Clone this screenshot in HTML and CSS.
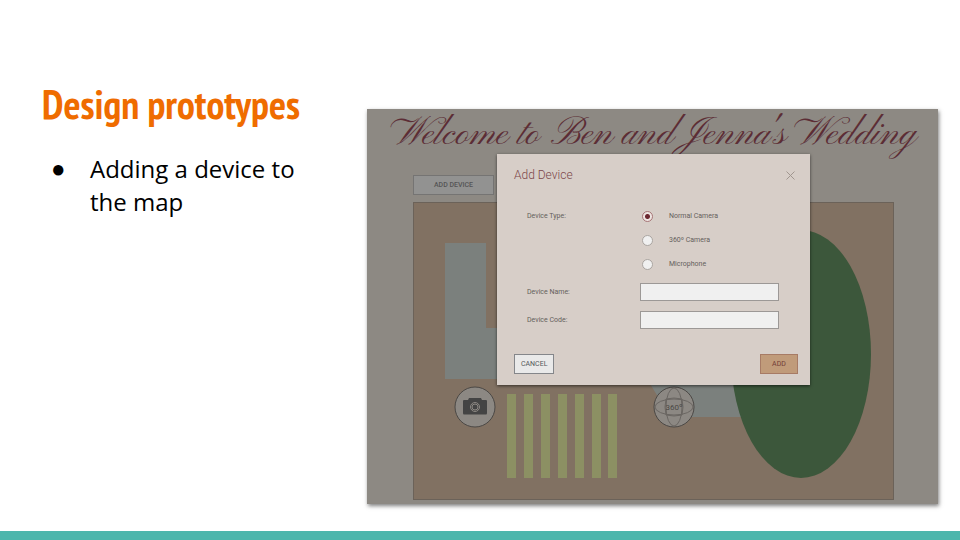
FILE: index.html
```html
<!DOCTYPE html>
<html lang="en">
<head>
<meta charset="utf-8">
<meta name="viewport" content="width=device-width, initial-scale=1">
<title>Design prototypes</title>
<link rel="stylesheet" href="styles.css">
</head>
<body>
<div class="slide">
  <main class="content">
    <section class="notes">
      <h1 class="notes-title">Design prototypes</h1>
      <ul class="notes-list">
        <li>Adding a device to the map</li>
      </ul>
    </section>

    <section class="prototype">
      <h2 class="banner">Welcome to Ben and Jenna's Wedding</h2>
      <button class="button open-button" type="button">ADD DEVICE</button>
      <svg class="map" viewBox="0 0 481 298" role="img" aria-label="Venue map">
        <rect class="ground" x="0.5" y="0.5" width="480" height="297"/>
        <path class="building" d="M32 41H73V126H120V177H32Z"/>
        <path class="building" d="M230 170L257 215H350V170Z"/>
        <ellipse class="garden" cx="388" cy="152" rx="70" ry="124"/>
        <g class="tables">
          <rect x="94" y="192" width="9" height="84"/>
          <rect x="111" y="192" width="9" height="84"/>
          <rect x="128" y="192" width="9" height="84"/>
          <rect x="145" y="192" width="9" height="84"/>
          <rect x="162" y="192" width="9" height="84"/>
          <rect x="179" y="192" width="9" height="84"/>
          <rect x="195" y="192" width="9" height="84"/>
        </g>
        <g transform="translate(62 205)">
          <circle class="pin" r="20"/>
          <path class="camera" d="M-11 -7H-7L-6 -9H6L7 -7H11Q12 -7 12 -6V6Q12 7.500 11 7.500H-11Q-12 7.500 -12 6V-6Q-12 -7 -11 -7Z"/>
          <circle class="lens" r="4.500"/>
          <circle class="lens" r="3"/>
        </g>
        <g transform="translate(261 205)">
          <circle class="pin" r="20"/>
          <g class="globe">
            <ellipse rx="8" ry="19"/>
            <ellipse rx="19" ry="8"/>
            <path d="M-8 -8Q0 -10 8 -8Q10 0 8 8Q0 10 -8 8Q-10 0 -8 -8Z"/>
          </g>
          <text class="globe-text" x="0" y="3">360º</text>
        </g>
      </svg>

      <form class="dialog" role="dialog" aria-labelledby="dialog-title">
        <header class="dialog-header">
          <h3 class="dialog-title" id="dialog-title">Add Device</h3>
          <button class="close" type="button" aria-label="Close">
            <svg viewBox="0 0 9 9"><path d="M0.500 0.500L8.500 8.500M8.500 0.500L0.500 8.500"/></svg>
          </button>
        </header>
        <div class="fields">
          <span id="type-label">Device Type:</span>
          <div class="options" role="radiogroup" aria-labelledby="type-label">
            <label class="option"><input type="radio" name="type" checked>Normal Camera</label>
            <label class="option"><input type="radio" name="type">360º Camera</label>
            <label class="option"><input type="radio" name="type">Microphone</label>
          </div>
          <label for="device-name">Device Name:</label>
          <input class="textbox" id="device-name" type="text">
          <label for="device-code">Device Code:</label>
          <input class="textbox" id="device-code" type="text">
        </div>
        <footer class="actions">
          <button class="button cancel" type="button">CANCEL</button>
          <button class="button add" type="submit">ADD</button>
        </footer>
      </form>
    </section>
  </main>
  <div class="accent-bar"></div>
</div>
</body>
</html>
```
FILE: styles.css
```css
* {
  box-sizing: border-box;
}

body {
  margin: 0;
  background: #fff;
  color: #000;
  font-family: "Open Sans", sans-serif;
}

.slide {
  display: flex;
  flex-direction: column;
  min-height: 100vh;
}

.content {
  flex: 1;
  display: grid;
  grid-template-columns: minmax(0, 325fr) minmax(0, 571fr);
  align-items: start;
  padding: 78px 22px 16px 42px;
}

.accent-bar {
  height: 9px;
  background: #4db6ac;
}

.notes {
  padding-right: 48px;
}

.notes-title {
  margin: 0;
  color: #ef6c00;
  font: bold 40px/52px "PT Sans Narrow", "Liberation Sans Narrow", "Liberation Sans", sans-serif;
  white-space: nowrap;
}

.notes-list {
  margin: 22px 0 0;
  padding: 0;
  list-style: none;
  font-size: 24px;
  line-height: 33px;
}

.notes-list li {
  display: flex;
}

.notes-list li::before {
  content: "●";
  flex: none;
  width: 39px;
  padding-left: 9px;
  font-family: "Liberation Sans", sans-serif;
}

.prototype {
  position: relative;
  display: flex;
  flex-direction: column;
  align-items: flex-start;
  margin-top: 31px;
  padding: 0 44px 4px 46px;
  background: #8d8983;
  box-shadow: 1px 2px 4px rgba(0, 0, 0, 0.5);
  font-family: Roboto, sans-serif;
}

.banner {
  align-self: center;
  margin: 0 -44px 14px;
  color: #5c2d35;
  font: 38px/52px "Pinyon Script", "Liberation Serif", serif;
  white-space: nowrap;
}

.button {
  height: 20px;
  padding: 0 6px;
  border: 1px solid #84868a;
  font: 7px/18px Roboto, sans-serif;
}

.open-button {
  width: 81px;
  margin-bottom: 7px;
  border-color: #757473;
  background: #929291;
  color: #555;
  font-weight: 500;
}

.map {
  display: block;
  width: 100%;
}

.ground {
  fill: #817162;
  stroke: #6b6259;
}

.building {
  fill: #7b807d;
}

.garden {
  fill: #3c573b;
}

.tables {
  fill: #8c9063;
}

.pin {
  fill: #8c8883;
  stroke: #4b4845;
}

.camera {
  fill: #444;
}

.lens {
  fill: none;
  stroke: #8c8883;
}

.globe {
  fill: none;
  stroke: #6a6662;
}

.globe-text {
  fill: #4b4845;
  font-size: 8px;
  text-anchor: middle;
}

.dialog {
  position: absolute;
  top: 45px;
  left: 130px;
  width: 313px;
  padding: 13px 12px 11px 17px;
  background: #d7cec8;
  box-shadow: 0 1px 3px rgba(0, 0, 0, 0.6);
  color: #655f5c;
  font-size: 7px;
}

.dialog-header {
  display: flex;
  align-items: center;
  justify-content: space-between;
  margin-bottom: 24px;
}

.dialog-title {
  margin: 0;
  color: #7c4648;
  font-size: 12px;
  font-weight: 300;
  line-height: 16px;
}

.close {
  width: 9px;
  height: 9px;
  margin-right: 3px;
  padding: 0;
  border: 0;
  background: none;
}

.close svg {
  display: block;
  stroke: #a0968f;
}

.fields {
  display: grid;
  grid-template-columns: 113px 1fr;
  row-gap: 10px;
  padding: 0 19px 0 13px;
  line-height: 18px;
}

.options {
  display: grid;
  row-gap: 6px;
}

.option {
  display: flex;
  align-items: center;
}

.option input {
  appearance: none;
  width: 11px;
  height: 11px;
  margin: 0 16px 0 2px;
  border: 1px solid #aaa5a1;
  border-radius: 50%;
  background: #f0f0f0;
}

.option input:checked {
  border-color: #a77678;
  background: radial-gradient(circle, #6b2730 2px, #eee4e1 3px);
}

.textbox {
  width: 100%;
  height: 18px;
  padding: 0 4px;
  border: 1px solid #9c9896;
  background: #f0f0f0;
  font: inherit;
}

.actions {
  display: flex;
  justify-content: space-between;
  margin-top: 25px;
}

.cancel {
  background: #e9e9e9;
  color: #55585a;
}

.add {
  width: 38px;
  border-color: #a77b65;
  background: #c09b7a;
  color: #723d37;
}
```
